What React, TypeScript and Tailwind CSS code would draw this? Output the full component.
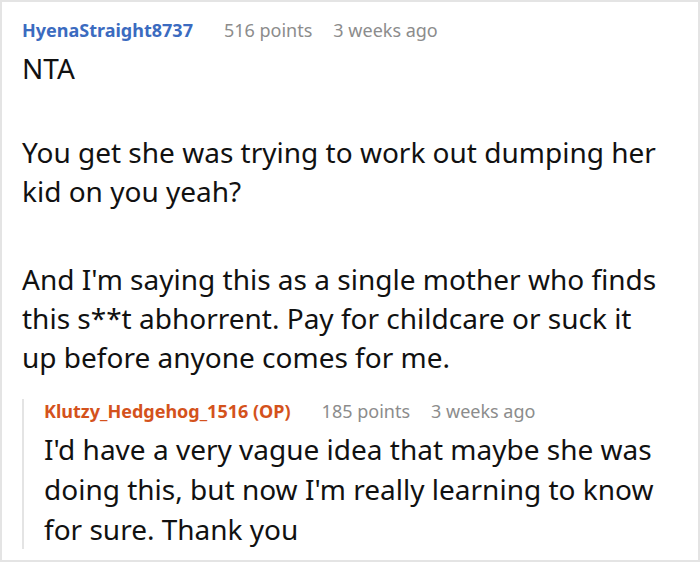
export default function App() {
  const font = { fontFamily: '"Noto Sans", sans-serif' };
  return (
    <div
      className="w-[700px] h-[562px] bg-white border-2 border-[#e4e4e4] pl-[20px] pr-[38px] pt-[16px] overflow-hidden"
      style={font}
    >
      <div className="flex items-baseline text-[18px] leading-[24px]">
        <span className="font-bold text-[#3b6bc0]">HyenaStraight8737</span>
        <span className="ml-[31px] text-[#8c8c8c]">516 points</span>
        <span className="ml-[21px] text-[#8c8c8c]">3 weeks ago</span>
      </div>
      <div className="mt-[7px] text-[28px] leading-[39px] text-[#111]">
        <p>NTA</p>
        <p className="mt-[45px]">You get she was trying to work out dumping her kid on you yeah?</p>
        <p className="mt-[49px]">
          And I'm saying this as a single mother who finds this s**t abhorrent. Pay for childcare or suck it up before anyone comes for me.
        </p>
      </div>
      <div className="mt-[33px] border-l-2 border-[#e4e4e4] pl-[20px]">
        <div className="-mt-[11px] flex items-baseline text-[18px] leading-[24px]">
          <span className="font-bold text-[#d4521c]">Klutzy_Hedgehog_1516 (OP)</span>
          <span className="ml-[31px] text-[#8c8c8c]">185 points</span>
          <span className="ml-[21px] text-[#8c8c8c]">3 weeks ago</span>
        </div>
        <p className="mt-[6px] -mb-[7px] text-[28px] leading-[40px] text-[#111]">
          I'd have a very vague idea that maybe she was doing this, but now I'm really learning to know for sure. Thank you
        </p>
      </div>
    </div>
  );
}
